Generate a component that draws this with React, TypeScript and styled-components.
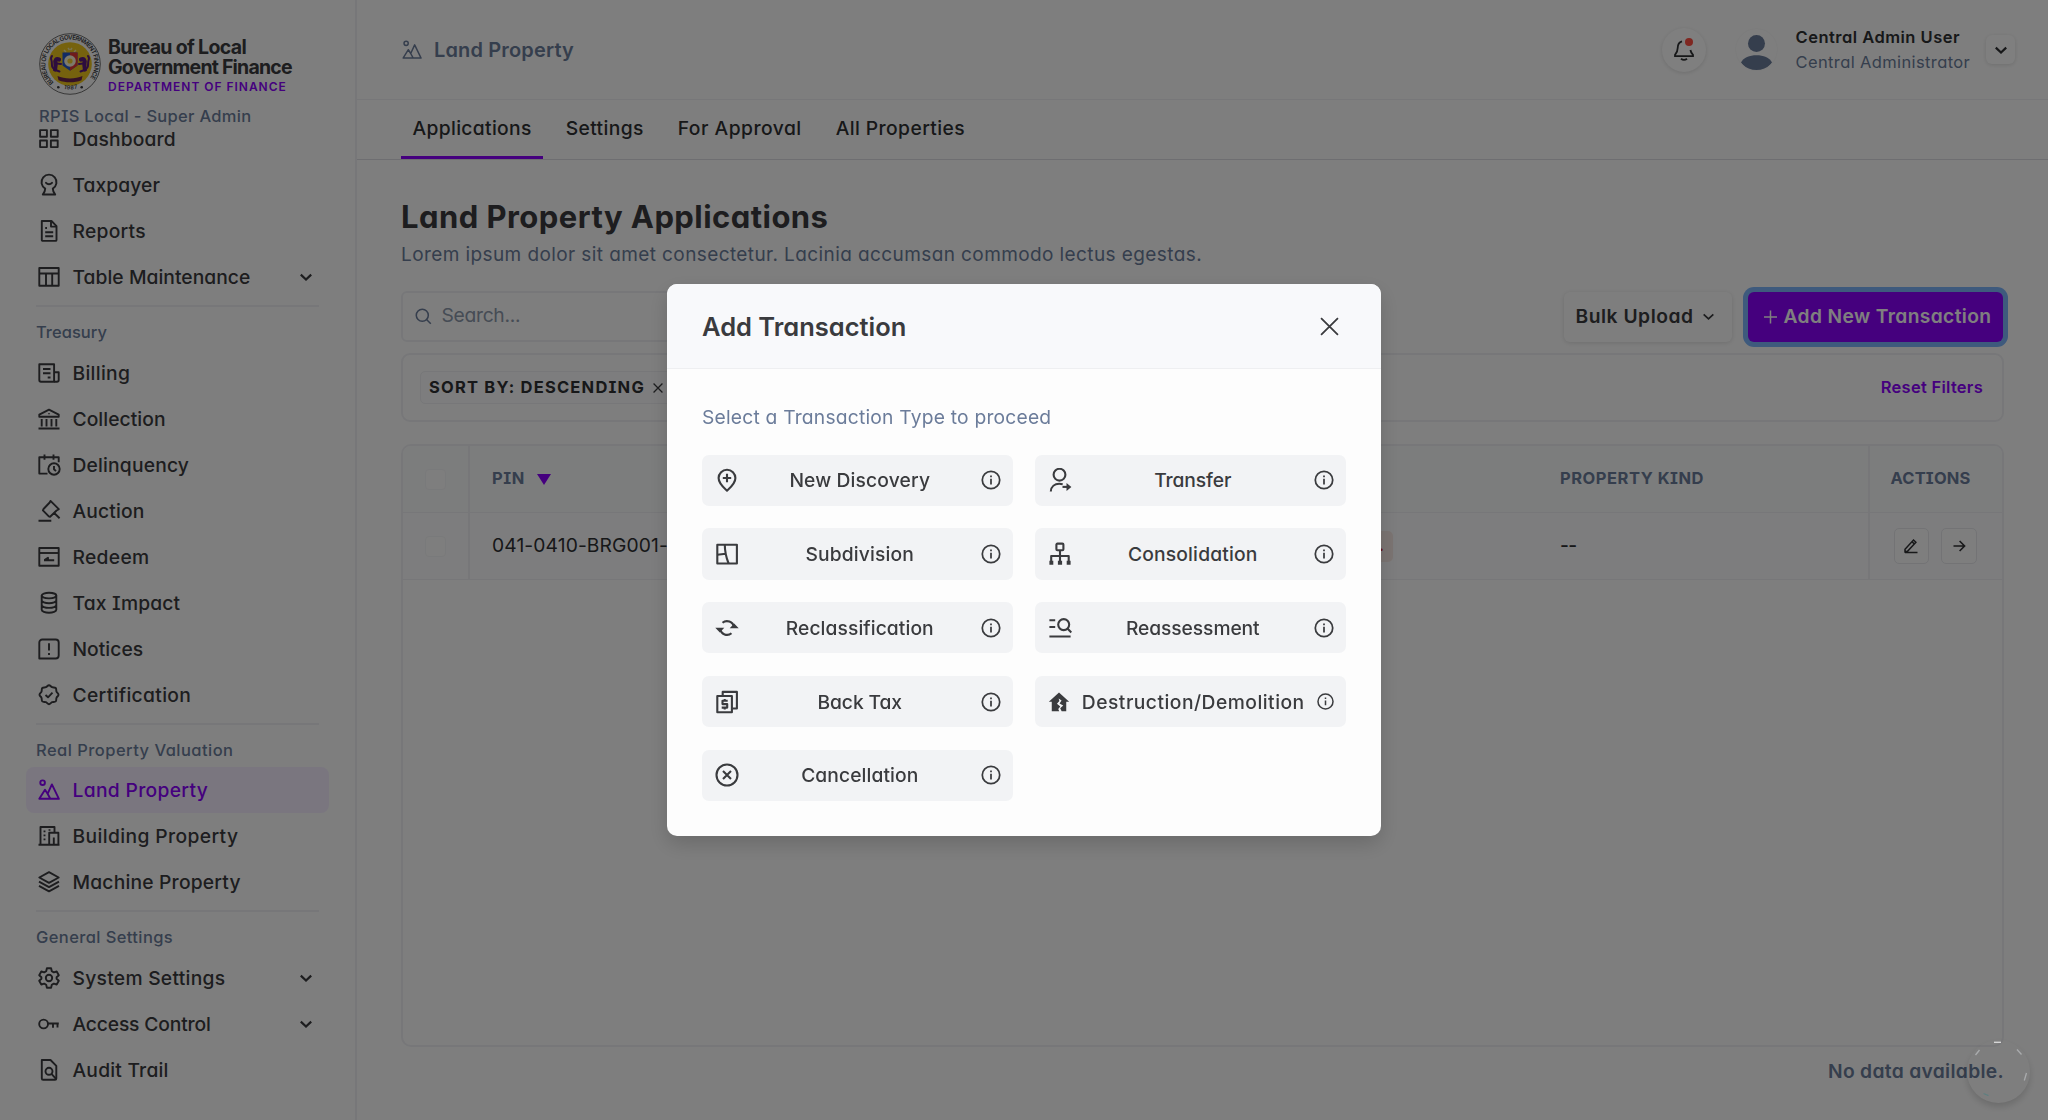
import React from 'react';
import styled, { createGlobalStyle, css } from 'styled-components';

const color = {
  page: '#fdfdfd',
  ink: '#3a3b3e',
  strong: '#2f3033',
  slate: '#6b7c9a',
  purple: '#8a00fc',
  line: '#eeeff2',
  card: '#f2f3f5',
};

const GlobalStyle = createGlobalStyle`
  *, *::before, *::after { box-sizing: border-box; }
  body {
    margin: 0;
    background: ${color.page};
    color: ${color.ink};
    font-family: Inter, "Open Sans", sans-serif;
    font-feature-settings: 'cv08', 'cv11';
    overflow: hidden;
  }
  svg { display: block; flex: none; }
`;

/* ---------- text ---------- */

type TextProps = { $size?: number; $weight?: number; $track?: number; $color?: string };

const Text = styled.span<TextProps>`
  font-size: ${(p) => p.$size ?? 19.25}px;
  font-weight: ${(p) => p.$weight ?? 450};
  letter-spacing: ${(p) => p.$track ?? 0}em;
  color: ${(p) => p.$color ?? 'inherit'};
  line-height: 1.3;
  white-space: nowrap;
`;

/* ---------- icons ---------- */

type IconProps = { size?: number; stroke?: number; children?: React.ReactNode };

const Icon = ({ size = 24, stroke = 1.9, children }: IconProps) => (
  <svg
    width={size}
    height={size}
    viewBox="0 0 24 24"
    fill="none"
    stroke="currentColor"
    strokeWidth={stroke}
    strokeLinejoin="round"
  >
    {children}
  </svg>
);

const GridIcon = () => (
  <Icon>
    <rect x="3.1" y="3.1" width="6.8" height="6.6" />
    <rect x="13.9" y="3.1" width="6.8" height="6.6" />
    <rect x="3.1" y="13.5" width="6.8" height="6.6" />
    <rect x="13.9" y="13.5" width="6.8" height="6.6" />
  </Icon>
);

const TaxpayerIcon = () => (
  <Icon>
    <path d="M8.2 15.600a7.500 7.500 0 1 1 7.600 0c.1 2.400.8 4.300 2.400 5.900H5.800c1.600-1.600 2.300-3.500 2.400-5.900Z" />
    <path d="M9 9.800c1.700 1.900 4.300 1.900 6 0" strokeLinecap="round" />
  </Icon>
);

const ReportIcon = () => (
  <Icon>
    <path d="M4.800 2h9.700l5 5.100V21a.9.9 0 0 1-.9.900H5.700a.9.9 0 0 1-.9-.9Z" />
    <path d="M14 2.300v5.300h5.200M8.200 9h1.800M8.200 13.200h8M8.200 17.300h8" />
  </Icon>
);

const TableIcon = () => (
  <Icon>
    <rect x="2.300" y="3" width="19.400" height="17.700" />
    <path d="M2.300 8.500h19.400M9 8.500v12.200M15.200 8.500v12.200" />
  </Icon>
);

const BillingIcon = () => (
  <Icon>
    <path d="M2.300 3.300h14.800v17.400H4a1.700 1.700 0 0 1-1.700-1.700Z" />
    <path d="M17.100 11.300h4.600v7.700a1.700 1.700 0 0 1-1.700 1.700h-2.900M6 8h7.500M6 12.300h7.500M10.700 16.500h2.800" />
  </Icon>
);

const BankIcon = () => (
  <Icon>
    <path d="M2.300 9.800V7.600L12 2.700l9.700 4.900v2.200ZM1.500 21.500h21M4.700 12v7.500M9.500 12v7.500M14.500 12v7.500M19.300 12v7.500" />
    <path d="M12 6.300v1" />
  </Icon>
);

const CalendarClockIcon = () => (
  <Icon>
    <path d="M10.500 20.600H2.300V4.300h19.400v4.900M7.500 1.500v5.300M16.500 1.500v5.300" />
    <circle cx="17" cy="16" r="5.700" />
    <path d="M17 12.900v3.400l2 1.800" />
  </Icon>
);

const GavelIcon = () => (
  <Icon>
    <path d="m13.500 1.900 8.300 8.300-2.200 1.300-6.500 6.300-1.300-.4-5.900-6 .6-1.400 6.200-6.500ZM16.700 13.500l5.900 5.700M1.500 21.700h12.800" />
  </Icon>
);

const RedeemIcon = () => (
  <Icon>
    <rect x="2.300" y="3" width="19.400" height="17.700" />
    <path d="M2.300 8h19.400" />
    <path d="M7 15.300h10.200M7.500 15l3.500-2.300v2" />
  </Icon>
);

const DatabaseIcon = () => (
  <Icon>
    <ellipse cx="12" cy="4.600" rx="7.300" ry="2.800" />
    <path d="M4.700 4.600v14.200c0 1.600 3.300 2.900 7.300 2.900s7.300-1.300 7.300-2.900V4.600M4.700 9.300c0 1.600 3.300 2.900 7.300 2.900s7.300-1.300 7.300-2.900M4.700 14c0 1.600 3.300 2.900 7.300 2.900s7.300-1.300 7.300-2.900" />
  </Icon>
);

const NoticeIcon = () => (
  <Icon>
    <path d="M2.300 21.500V5.500a3 3 0 0 1 3-3h13.400a3 3 0 0 1 3 3v13a3 3 0 0 1-3 3Z" />
    <path d="M12 6.300v7.200M12 16v2" />
  </Icon>
);

const CertificateIcon = () => (
  <Icon>
    <path d="M12 2.200c1.300 0 1.900 1.500 3.100 2s2.700-.1 3.600.8.300 2.400.8 3.600 2 1.800 2 3.100-1.500 1.900-2 3.100.1 2.700-.8 3.600-2.400.3-3.600.8-1.800 2-3.100 2-1.900-1.500-3.100-2-2.700.1-3.600-.8-.3-2.400-.8-3.600-2-1.800-2-3.100 1.500-1.900 2-3.100-.1-2.700.8-3.600 2.400-.3 3.600-.8 1.800-2 3.100-2Z" />
    <path d="m8.500 12 2.500 2.300 4.500-4.600" />
  </Icon>
);

const LandIcon = ({ size, stroke }: { size?: number; stroke?: number }) => (
  <Icon size={size} stroke={stroke}>
    <path d="M2.300 20.800 8 11.700l2.600 4.100 4.300-9.400 7 14.400ZM10.600 15.800l2.600 4.700" />
    <circle cx="5.600" cy="4.700" r="2.300" />
  </Icon>
);

const BuildingIcon = () => (
  <Icon>
    <path d="M3.500 20.700V3h14v5.500M1.500 20.700h21M12.200 20.700V8.800h9.200v11.900M16.800 20.500v-7" />
    <path d="M7.500 6.500v1.700M7.500 10.500v1.700M7.500 14.500v1.700M12.500 5.200v1.600" />
  </Icon>
);

const LayersIcon = () => (
  <Icon>
    <path d="m12 2.200 9.700 5.300L12 12.800 2.300 7.500ZM2 11.700l10 5.400 10-5.400M2 15.900l10 5.400 10-5.400" />
  </Icon>
);

const GearIcon = () => (
  <Icon>
    <path d="M9.900 2.300h4.200l.7 2.900 2 1.200 2.900-.9 2.100 3.700-2.200 2v1.600l2.200 2-2.100 3.700-2.900-.9-2 1.200-.7 2.900H9.900l-.7-2.900-2-1.200-2.900.9-2.100-3.700 2.200-2v-1.600l-2.200-2 2.100-3.700 2.900.9 2-1.200Z" />
    <circle cx="12" cy="12" r="3.200" />
  </Icon>
);

const KeyIcon = () => (
  <Icon>
    <circle cx="6.600" cy="12" r="4.400" />
    <path d="M11 11.500h10.800M16 11.500v4.300M20.500 11.500v4" />
  </Icon>
);

const AuditIcon = () => (
  <Icon>
    <path d="M4.800 2h8.700l5.800 5.800v12.700a1.300 1.300 0 0 1-1.300 1.300H6.100a1.300 1.300 0 0 1-1.300-1.300Z" />
    <circle cx="12" cy="13.300" r="3.500" />
    <path d="m14.500 15.800 4.500 5" />
  </Icon>
);

const PinPlusIcon = () => (
  <Icon stroke={2.1}>
    <path d="M12 22.600c-3.600-3.200-8.400-6.800-8.400-12.500a8.400 8.400 0 0 1 16.800 0c0 5.700-4.800 9.300-8.400 12.500Z" />
    <path d="M12 5.800v8.400M7.800 10h8.400" />
  </Icon>
);

const SubdivisionIcon = () => (
  <Icon stroke={2.1}>
    <rect x="2.300" y="2.700" width="19.600" height="18.800" />
    <path d="M9.800 2.700c0 7 1.500 13 3.800 18.800M2.300 12.700l8.500-1" />
  </Icon>
);

const SyncIcon = () => (
  <Icon stroke={2.1}>
    <path d="M7.500 6.800A7 7 0 0 1 18.900 11M16.500 17.200A7 7 0 0 1 5.100 13" />
    <path d="M14.700 12.200h9L19.200 7.500ZM9.300 11.800h-9l4.500 4.700Z" fill="currentColor" stroke="none" />
  </Icon>
);

const BackTaxIcon = () => (
  <Icon stroke={2.1}>
    <path d="M7.700 6V1.900h14.200v16.600h-4.500" />
    <rect x="2.300" y="6" width="14.600" height="16.300" />
    <path d="M12.700 10.800H7.500v3.300h4.700v3.500H6.700M9.700 9v1.800M9.700 17.600v1.800" />
  </Icon>
);

const CancelIcon = () => (
  <Icon stroke={2.1}>
    <circle cx="12" cy="12" r="10.500" />
    <path d="m8 8 8 8M16 8l-8 8" />
  </Icon>
);

const TransferIcon = () => (
  <Icon stroke={2.1}>
    <circle cx="11.500" cy="6.700" r="5.900" />
    <path d="M2.800 23.500c.3-5 4-7.700 8.400-7.700 1.300 0 2.500.2 3.500.6" />
    <path d="M14.500 18.900h5" />
    <path d="M18.500 14.900v8l4.900-4Z" fill="currentColor" stroke="none" />
  </Icon>
);

const SitemapIcon = () => (
  <Icon stroke={2.1}>
    <rect x="8.400" y="1.600" width="7" height="6.600" rx="1" />
    <path d="M12 8.200v12M3.200 20v-6h17.500v6" />
    <path d="M1.400 18.700h3.900v4.100H1.400ZM9.900 18.700h4.200v4.100H9.900ZM18.700 18.700h3.900v4.100h-3.900Z" fill="currentColor" stroke="none" />
  </Icon>
);

const ListSearchIcon = () => (
  <Icon stroke={2.1}>
    <path d="M1.400 4.300h5.800M1.400 11h5.800M1.400 20.500h21.200" />
    <circle cx="15.700" cy="8.600" r="5.500" />
    <path d="m19.500 12.500 3.800 4" />
  </Icon>
);

const BrokenHouseIcon = () => (
  <Icon size={22}>
    <path
      d="M12 1.700 23.100 11.800h-3.200V22h-5l-1.600-3.300 3.300-2.800-4-2.400 2.200-3.200-3.200-2 .8 2.600-2.600 3.100 3.600 3-2.200 2.500 1 2.500H4.100V11.800H.9Z"
      fill="currentColor"
      stroke="none"
    />
  </Icon>
);

const InfoIcon = ({ size = 22 }: { size?: number }) => (
  <Icon size={size} stroke={1.9}>
    <circle cx="12" cy="12" r="9.500" />
    <path d="M12 10.600v6.200M12 7v1.900" />
  </Icon>
);

const ChevronIcon = ({ size = 14, stroke = 2.2 }: { size?: number; stroke?: number }) => (
  <svg width={size} height={size} viewBox="0 0 14 14" fill="none" stroke="currentColor" strokeWidth={stroke}>
    <path d="m1.800 4.600 5.200 4.900 5.200-4.900" />
  </svg>
);

const SearchIcon = () => (
  <Icon size={17} stroke={2.2}>
    <circle cx="10.300" cy="10.300" r="8.500" />
    <path d="m16.300 16.300 6 6" />
  </Icon>
);

const CloseIcon = ({ size, stroke }: { size: number; stroke: number }) => (
  <svg width={size} height={size} viewBox="0 0 18 18" fill="none" stroke="currentColor" strokeWidth={stroke}>
    <path d="m1 1 16 16M17 1 1 17" />
  </svg>
);

const BellIcon = () => (
  <svg width="22" height="24" viewBox="0 0 22 24" fill="none" stroke="currentColor" strokeWidth="1.800">
    <path d="M9 3.300C5.700 4.200 4.700 7 4.700 10c0 3-.8 4.600-2.700 6.800v1.400h18v-1.400c-1.500-1.700-2.300-2.900-2.600-4.800" />
    <path d="M8 20.700c1.700 1.400 4.300 1.400 6 0" />
  </svg>
);

const PersonIcon = () => (
  <svg width="41" height="41" viewBox="0 0 41 41" fill={color.slate}>
    <circle cx="20.500" cy="14.500" r="8.500" />
    <path d="M5 33.500c2.500-5 8.500-7.300 15.500-7.300S33.500 28.500 36 33.500c-3.500 5.500-9 8-15.500 8S8.500 39 5 33.500Z" />
  </svg>
);

const PencilIcon = () => (
  <svg width="16" height="16" viewBox="0 0 16 16" fill="none" stroke="currentColor" strokeWidth="1.500">
    <path d="M2 13.800v-2.600L10.500 2l2.400 2.300L4.500 13.300ZM9 3.700l2.300 2.200M2 14.600h12.500" />
  </svg>
);

const ArrowIcon = () => (
  <svg width="14" height="14" viewBox="0 0 14 14" fill="none" stroke="currentColor" strokeWidth="1.600">
    <path d="M1.500 7h11M7.600 2l5 5-5 5" />
  </svg>
);

const PlusIcon = () => (
  <svg width="13" height="14" viewBox="0 0 13 14" fill="none" stroke="currentColor" strokeWidth="1.500">
    <path d="M6.500.5v13M0 7h13" />
  </svg>
);

const Lion = () => (
  <g fill="none" stroke="#5b1a7c" strokeLinecap="round" strokeLinejoin="round">
    <path d="M20 26.500c-3-1-4 1-3.500 3.500s-.2 5-.5 6.500" strokeWidth="4.200" />
    <path d="M18 30.500l4 .5M16.500 37l4 1.500M14 35c-2-1.500-.5-5-1.500-7.500s-.5-3.500.5-4.500" strokeWidth="2" />
  </g>
);

const Seal = () => (
  <svg width="62" height="62" viewBox="0 0 62 62">
    <defs>
      <path id="seal-arc" d="M14.700 49.300a24.500 24.500 0 1 1 32.600 0" />
      <path id="seal-year" d="M20.500 54.200a26 26 0 0 0 21 0" />
    </defs>
    <circle cx="31" cy="31" r="30.300" fill="#f8f8f8" stroke="#4a4a4a" strokeWidth=".8" />
    <circle cx="31" cy="31" r="21.800" fill="#ecc51c" />
    <g fill="#3a3b3e" fontFamily="Inter, sans-serif" fontWeight="600">
      <text fontSize="6.200">
        <textPath href="#seal-arc" textLength="112">BUREAU OF LOCAL GOVERNMENT FINANCE</textPath>
      </text>
      <text fontSize="5.600">
        <textPath href="#seal-year" textLength="14" startOffset="4.500">1987</textPath>
      </text>
      <circle cx="19.300" cy="54.200" r="1.300" />
      <circle cx="42.700" cy="54.200" r="1.300" />
    </g>
    <path d="M25 17l2 2M29 15l1.500 2M33 15l-1.500 2M37 17l-2 2" stroke="#f3e7a6" strokeWidth="1.500" />
    <Lion />
    <g transform="matrix(-1 0 0 1 62 0)">
      <Lion />
    </g>
    <path d="M23.500 19.500h15v13L31 37.800l-7.500-5.300Z" fill="#2457c8" />
    <path d="M31 19.500h7.500v13L31 37.800Z" fill="#e03636" />
    <circle cx="31" cy="28" r="5.800" fill="#fbf4d8" />
    <circle cx="31" cy="28" r="2.600" fill="#f4cf32" />
    <path d="M18.500 43c7 3.300 18 3.300 25 0l-1 4.200c-7 2.800-16 2.800-23 0Z" fill="#6b2350" />
  </svg>
);

/* ---------- shell ---------- */

const Shell = styled.div`
  display: flex;
  height: 1120px;
`;

const Sidebar = styled.aside`
  flex: none;
  width: 357px;
  padding: 33px 26px 0;
  border-right: 2px solid ${color.line};
  display: flex;
  flex-direction: column;
`;

const Brand = styled.div`
  display: flex;
  gap: 7px;
  padding-left: 13px;
  height: 74px;
  font-feature-settings: normal;
`;

const BrandName = styled.div`
  display: flex;
  flex-direction: column;
  padding-top: 3.500px;
`;

const BrandLine = styled.span<{ $track: number }>`
  font-size: 19.500px;
  font-weight: 650;
  line-height: 20px;
  letter-spacing: ${(p) => p.$track}em;
  white-space: nowrap;
`;

const BrandDept = styled.span`
  margin-top: 2px;
  font-size: 12px;
  font-weight: 600;
  line-height: 16px;
  letter-spacing: 0.081em;
  color: ${color.purple};
  white-space: nowrap;
`;

const Edition = styled.div`
  display: flex;
  align-items: center;
  height: 20px;
  padding-left: 13px;
  color: ${color.slate};
`;

const Nav = styled.nav`
  margin-top: -11px;
`;

const NavRow = styled.a<{ $active?: boolean }>`
  display: flex;
  align-items: center;
  gap: 12px;
  height: 46px;
  padding: 0 16px 0 10.500px;
  border-radius: 8px;
  color: ${(p) => (p.$active ? color.purple : color.ink)};
  background: ${(p) => (p.$active ? '#f4edff' : 'transparent')};
`;

const NavText = styled(Text)`
  flex: 1;
  padding-top: 1.500px;
`;

const NavHeading = styled.div<{ $height: number }>`
  display: flex;
  flex-direction: column;
  height: ${(p) => p.$height}px;
  margin: 0 10px;
  padding-top: 5px;
  color: ${color.slate};

  &::before {
    content: '';
    height: 2px;
    margin-bottom: 14.500px;
    background: ${color.line};
  }
`;

type NavEntry = { label: string; track: number; icon: React.ReactNode; active?: boolean; expands?: boolean };
type NavGroup = { heading?: string; track?: number; height?: number; items: NavEntry[] };

const navGroups: NavGroup[] = [
  {
    items: [
      { label: 'Dashboard', track: 0.007, icon: <GridIcon /> },
      { label: 'Taxpayer', track: 0.003, icon: <TaxpayerIcon /> },
      { label: 'Reports', track: 0.013, icon: <ReportIcon /> },
      { label: 'Table Maintenance', track: 0.002, icon: <TableIcon />, expands: true },
    ],
  },
  {
    heading: 'Treasury',
    track: 0.002,
    height: 50,
    items: [
      { label: 'Billing', track: 0.016, icon: <BillingIcon /> },
      { label: 'Collection', track: 0.003, icon: <BankIcon /> },
      { label: 'Delinquency', track: 0.009, icon: <CalendarClockIcon /> },
      { label: 'Auction', track: 0.008, icon: <GavelIcon /> },
      { label: 'Redeem', track: 0.015, icon: <RedeemIcon /> },
      { label: 'Tax Impact', track: 0.009, icon: <DatabaseIcon /> },
      { label: 'Notices', track: 0.002, icon: <NoticeIcon /> },
      { label: 'Certification', track: 0.017, icon: <CertificateIcon /> },
    ],
  },
  {
    heading: 'Real Property Valuation',
    track: 0.028,
    height: 49,
    items: [
      { label: 'Land Property', track: 0.0165, icon: <LandIcon />, active: true },
      { label: 'Building Property', track: 0.02, icon: <BuildingIcon /> },
      { label: 'Machine Property', track: 0.01, icon: <LayersIcon /> },
    ],
  },
  {
    heading: 'General Settings',
    track: 0.024,
    height: 50,
    items: [
      { label: 'System Settings', track: 0.014, icon: <GearIcon />, expands: true },
      { label: 'Access Control', track: -0.008, icon: <KeyIcon />, expands: true },
      { label: 'Audit Trail', track: 0.011, icon: <AuditIcon /> },
    ],
  },
];

const Main = styled.main`
  flex: 1;
  min-width: 0;
  display: flex;
  flex-direction: column;
`;

const TopBar = styled.header`
  display: flex;
  align-items: center;
  justify-content: space-between;
  height: 100px;
  padding: 0 33px 0 44px;
  border-bottom: 1px solid ${color.line};
`;

const Crumb = styled.div`
  display: flex;
  align-items: center;
  gap: 11px;
  color: ${color.slate};
`;

const Account = styled.div`
  display: flex;
  align-items: center;
`;

const BellButton = styled.button`
  position: relative;
  display: grid;
  place-items: center;
  width: 44px;
  height: 44px;
  margin-right: 30px;
  padding: 0;
  border: 0;
  border-radius: 50%;
  background: #fefefe;
  color: ${color.strong};
  box-shadow: 0 1px 4px rgba(0, 0, 0, 0.13);
`;

const BellDot = styled.span`
  position: absolute;
  top: 10px;
  left: 23px;
  width: 8px;
  height: 8px;
  border-radius: 50%;
  background: #ff4f42;
`;

const Avatar = styled.div`
  width: 41px;
  height: 41px;
  margin-right: 19px;
  border-radius: 50%;
  box-shadow: 0 0 2px rgba(0, 0, 0, 0.07);
  overflow: hidden;
`;

const Identity = styled.div`
  display: flex;
  flex-direction: column;
  width: 190.500px;

  & > * {
    line-height: 25px;
  }
`;

const MenuButton = styled.button`
  display: grid;
  place-items: center;
  width: 29px;
  height: 29px;
  padding: 0;
  border: 0;
  border-radius: 6px;
  background: #fefefe;
  color: ${color.strong};
  box-shadow: 0 1px 4px rgba(0, 0, 0, 0.13);
`;

const Tabs = styled.div`
  display: flex;
  gap: 11px;
  height: 60px;
  padding: 0 44px;
  border-bottom: 1px solid #dcdde2;
`;

const Tab = styled.a<{ $active?: boolean }>`
  display: flex;
  align-items: center;
  padding: 1.500px 11.500px 0;
  color: ${color.strong};
  border-bottom: 3px solid ${(p) => (p.$active ? color.purple : 'transparent')};
`;

const Content = styled.section`
  display: flex;
  flex-direction: column;
  padding: 38px 44px 0 44px;
`;

const Title = styled.h1`
  margin: 0;
  font-size: 31px;
  font-weight: 700;
  line-height: 38px;
  letter-spacing: 0.0145em;
  color: ${color.ink};
`;

const Subtitle = styled.p`
  margin: 5px 0 22px;
  font-size: 19px;
  font-weight: 400;
  line-height: 28px;
  letter-spacing: 0.0213em;
  color: ${color.slate};
`;

const Toolbar = styled.div`
  display: flex;
  align-items: center;
  height: 51px;
`;

const SearchBox = styled.div`
  display: flex;
  align-items: center;
  gap: 9.500px;
  width: 420px;
  height: 51px;
  margin-right: auto;
  padding: 0 12px 1px;
  border: 2px solid ${color.line};
  border-radius: 6px;
  color: ${color.slate};
`;

const button = css`
  display: flex;
  align-items: center;
  height: 50px;
  padding: 0;
  border: 0;
  border-radius: 6px;
  font-family: inherit;
  font-feature-settings: inherit;
`;

const BulkButton = styled.button`
  ${button}
  gap: 9px;
  width: 168px;
  padding-left: 12px;
  margin-right: 16.500px;
  background: #fdfdfd;
  color: ${color.ink};
  box-shadow: 0 1px 5px rgba(0, 0, 0, 0.13);
`;

const AddButton = styled.button`
  ${button}
  gap: 7px;
  width: 255px;
  margin-right: 1px;
  padding-left: 15.500px;
  background: ${color.purple};
  color: #ffffff;
  box-shadow: 0 0 0 5px #7cb4fa;
`;

const FilterBar = styled.div`
  display: flex;
  align-items: center;
  justify-content: space-between;
  height: 69px;
  margin-top: 11px;
  padding: 0 19px 0 17px;
  border: 2px solid ${color.line};
  border-radius: 9px;
`;

const FilterTag = styled.div`
  display: flex;
  align-items: center;
  gap: 8px;
  height: 33px;
  padding: 0 9px 0 8px;
  border: 1px solid ${color.line};
  border-radius: 5px;
  background: #fbfbfd;
`;

const Table = styled.div`
  height: 603px;
  margin-top: 22px;
  border: 2px solid ${color.line};
  border-radius: 10px;
  overflow: hidden;
`;

const TableRow = styled.div<{ $head?: boolean }>`
  display: grid;
  grid-template-columns: 67px 711px 357px 329.500px 1fr;
  height: 67px;
  border-bottom: 1px solid ${color.line};
  background: ${(p) => (p.$head ? '#f9fafb' : '#fbfbfc')};
  color: ${(p) => (p.$head ? color.slate : color.strong)};
`;

const Cell = styled.div<{ $rule?: 'left' | 'right'; $inset?: number }>`
  display: flex;
  align-items: center;
  gap: 12px;
  padding-left: ${(p) => p.$inset ?? 22}px;
  border-left: ${(p) => (p.$rule === 'left' ? `2px solid ${color.line}` : '0')};
  border-right: ${(p) => (p.$rule === 'right' ? `2px solid ${color.line}` : '0')};
`;

const Checkbox = styled.span`
  width: 21px;
  height: 21px;
  border: 1px solid #f3f4f6;
  border-radius: 4px;
  background: #fdfdfd;
`;

const SortMark = styled.span`
  border: 7.500px solid transparent;
  border-top: 11.500px solid ${color.purple};
  border-bottom: 0;
`;

const Badge = styled.span`
  display: flex;
  align-items: center;
  justify-content: flex-end;
  width: 190px;
  height: 31px;
  padding-right: 9px;
  border-radius: 5px;
  background: #f7e9e5;
  color: #d02f2f;
`;

const RowAction = styled.button`
  display: grid;
  place-items: center;
  width: 35.500px;
  height: 36px;
  padding: 0;
  border: 1.500px solid #e6e7eb;
  border-radius: 5px;
  background: #fcfcfd;
  color: ${color.strong};
`;

const TableFooter = styled.div`
  display: flex;
  justify-content: flex-end;
  margin-top: 12px;
  color: ${color.slate};
`;

/* ---------- dialog ---------- */

const Overlay = styled.div`
  position: fixed;
  inset: 0;
  display: flex;
  align-items: center;
  justify-content: center;
  background: rgba(0, 0, 0, 0.5);
`;

const Dialog = styled.div`
  width: 714px;
  height: 552px;
  border-radius: 10px;
  background: #fdfdfd;
  overflow: hidden;
  box-shadow: 0 8px 20px rgba(0, 0, 0, 0.16);
`;

const DialogHeader = styled.div`
  display: flex;
  align-items: center;
  justify-content: space-between;
  height: 85px;
  padding: 1px 42px 0 35px;
  border-bottom: 1px solid #eeeff1;
  background: #f8f9fb;
`;

const DialogBody = styled.div`
  padding: 34px 35px 0;
`;

const Prompt = styled.div`
  display: flex;
  align-items: center;
  height: 30px;
  margin-bottom: 21.500px;
  color: ${color.slate};
`;

const CardGrid = styled.div`
  display: grid;
  grid-template-columns: 1fr 1fr;
  grid-auto-rows: 51.300px;
  gap: 22.500px 22px;
`;

const Card = styled.button`
  ${button}
  height: 100%;
  padding: 0 11.500px 0 13px;
  border-radius: 7px;
  background: ${color.card};
  color: ${color.ink};
`;

const CardLabel = styled(Text)`
  flex: 1;
  padding: 1px 0 0 1px;
  text-align: center;
`;

type CardEntry = { label: string; track: number; icon: React.ReactNode; infoSize?: number };

const cards: CardEntry[] = [
  { label: 'New Discovery', track: 0.007, icon: <PinPlusIcon /> },
  { label: 'Transfer', track: -0.006, icon: <TransferIcon /> },
  { label: 'Subdivision', track: 0.007, icon: <SubdivisionIcon /> },
  { label: 'Consolidation', track: 0.009, icon: <SitemapIcon /> },
  { label: 'Reclassification', track: 0.004, icon: <SyncIcon /> },
  { label: 'Reassessment', track: -0.005, icon: <ListSearchIcon /> },
  { label: 'Back Tax', track: -0.005, icon: <BackTaxIcon /> },
  { label: 'Destruction/Demolition', track: 0.025, icon: <BrokenHouseIcon />, infoSize: 19 },
  { label: 'Cancellation', track: 0.004, icon: <CancelIcon /> },
];

/* ---------- floating help bubble ---------- */

const Bubble = styled.div`
  position: fixed;
  left: 1966.500px;
  top: 1040px;
  width: 63px;
  height: 63px;
  border-radius: 50%;
  box-shadow: 0 4px 7px rgba(0, 0, 0, 0.15);
`;

const BubbleGlints = () => (
  <svg width="63" height="63" viewBox="0 0 63 63" fill="none" stroke="#a9abad" strokeWidth="1.300">
    <path d="M27 2.300h7" stroke="#dcdcdc" />
    <path d="m8.500 15 4-5M50 9.500l4.500 5M59.500 33 57.300 40.500" />
    <path d="m16.500 53.500 5 2.200" stroke="#5f7f80" />
  </svg>
);

export default function App() {
  return (
    <>
      <GlobalStyle />
      <Shell>
        <Sidebar>
          <Brand>
            <Seal />
            <BrandName>
              <BrandLine $track={-0.034}>Bureau of Local</BrandLine>
              <BrandLine $track={-0.041}>Government Finance</BrandLine>
              <BrandDept>DEPARTMENT OF FINANCE</BrandDept>
            </BrandName>
          </Brand>
          <Edition>
            <Text $size={16.5} $weight={500} $track={0.0185}>RPIS Local - Super Admin</Text>
          </Edition>
          <Nav>
            {navGroups.map((group, i) => (
              <React.Fragment key={i}>
                {group.heading && (
                  <NavHeading $height={group.height ?? 50}>
                    <Text $size={16.5} $weight={500} $track={group.track}>{group.heading}</Text>
                  </NavHeading>
                )}
                {group.items.map((item) => (
                  <NavRow key={item.label} $active={item.active}>
                    {item.icon}
                    <NavText $track={item.track}>{item.label}</NavText>
                    {item.expands && <ChevronIcon />}
                  </NavRow>
                ))}
              </React.Fragment>
            ))}
          </Nav>
        </Sidebar>

        <Main>
          <TopBar>
            <Crumb>
              <LandIcon size={22} stroke={1.6} />
              <Text $size={20} $weight={600} $track={0.0077}>Land Property</Text>
            </Crumb>
            <Account>
              <BellButton>
                <BellIcon />
                <BellDot />
              </BellButton>
              <Avatar>
                <PersonIcon />
              </Avatar>
              <Identity>
                <Text $size={16.5} $weight={600} $track={0.0293} $color={color.strong}>Central Admin User</Text>
                <Text $size={16.5} $weight={400} $track={0.023} $color={color.slate}>Central Administrator</Text>
              </Identity>
              <MenuButton>
                <ChevronIcon />
              </MenuButton>
            </Account>
          </TopBar>

          <Tabs>
            <Tab $active><Text $weight={500} $track={0.0175}>Applications</Text></Tab>
            <Tab><Text $weight={500} $track={0.0192}>Settings</Text></Tab>
            <Tab><Text $weight={500} $track={0.0256}>For Approval</Text></Tab>
            <Tab><Text $weight={500} $track={0.0215}>All Properties</Text></Tab>
          </Tabs>

          <Content>
            <Title>Land Property Applications</Title>
            <Subtitle>Lorem ipsum dolor sit amet consectetur. Lacinia accumsan commodo lectus egestas.</Subtitle>

            <Toolbar>
              <SearchBox>
                <SearchIcon />
                <Text $weight={400} $track={-0.015} $color="#8c98aa">Search...</Text>
              </SearchBox>
              <BulkButton>
                <Text $weight={600} $track={0.0269}>Bulk Upload</Text>
                <ChevronIcon size={13} stroke={1.9} />
              </BulkButton>
              <AddButton>
                <PlusIcon />
                <Text $weight={600} $track={0.0189}>Add New Transaction</Text>
              </AddButton>
            </Toolbar>

            <FilterBar>
              <FilterTag>
                <Text $size={16.5} $weight={700} $track={0.0736} $color={color.strong}>SORT BY: DESCENDING</Text>
                <CloseIcon size={10} stroke={2.3} />
              </FilterTag>
              <Text $size={16.5} $weight={600} $track={0.0165} $color={color.purple}>Reset Filters</Text>
            </FilterBar>

            <Table>
              <TableRow $head>
                <Cell $rule="right"><Checkbox /></Cell>
                <Cell>
                  <Text $size={16.5} $weight={700} $track={0.0376}>PIN</Text>
                  <SortMark />
                </Cell>
                <Cell />
                <Cell><Text $size={16.5} $weight={700} $track={0.032}>PROPERTY KIND</Text></Cell>
                <Cell $rule="left" $inset={21}>
                  <Text $size={16.5} $weight={700} $track={0.0103}>ACTIONS</Text>
                </Cell>
              </TableRow>
              <TableRow>
                <Cell $rule="right"><Checkbox /></Cell>
                <Cell><Text $weight={420} $track={0.0055}>041-0410-BRG001-0001</Text></Cell>
                <Cell>
                  <Badge><Text $size={16.5} $weight={600}>Pending.</Text></Badge>
                </Cell>
                <Cell><Text $track={-0.03}>--</Text></Cell>
                <Cell $rule="left" $inset={24}>
                  <RowAction><PencilIcon /></RowAction>
                  <RowAction><ArrowIcon /></RowAction>
                </Cell>
              </TableRow>
            </Table>

            <TableFooter>
              <Text $weight={600} $track={0.0165}>No data available.</Text>
            </TableFooter>
          </Content>
        </Main>
      </Shell>

      <Overlay>
        <Dialog role="dialog">
          <DialogHeader>
            <Text $size={25.5} $weight={600} $track={-0.0005}>Add Transaction</Text>
            <CloseIcon size={19} stroke={1.7} />
          </DialogHeader>
          <DialogBody>
            <Prompt>
              <Text $weight={420} $track={0.0105}>Select a Transaction Type to proceed</Text>
            </Prompt>
            <CardGrid>
              {cards.map((card) => (
                <Card key={card.label}>
                  {card.icon}
                  <CardLabel $track={card.track}>{card.label}</CardLabel>
                  <InfoIcon size={card.infoSize} />
                </Card>
              ))}
            </CardGrid>
          </DialogBody>
        </Dialog>
      </Overlay>

      <Bubble>
        <BubbleGlints />
      </Bubble>
    </>
  );
}
